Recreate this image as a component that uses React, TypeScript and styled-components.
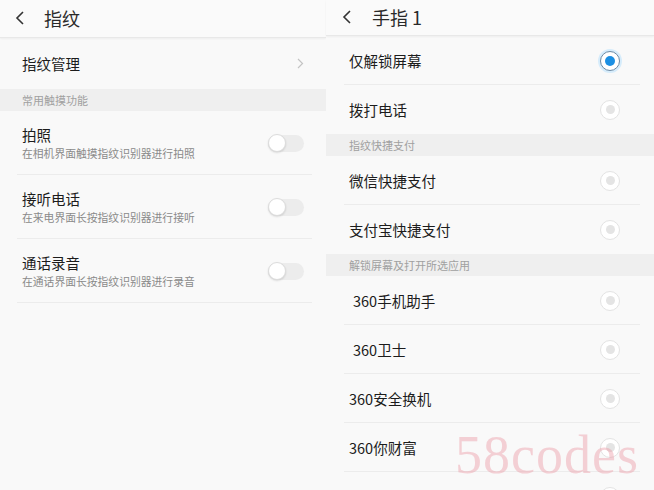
import styled, { createGlobalStyle } from 'styled-components';

const GlobalStyle = createGlobalStyle`
  html, body {
    margin: 0;
    padding: 0;
    background: #f8f8f8;
  }
  * {
    box-sizing: border-box;
  }
`;

const Screen = styled.div`
  position: relative;
  width: 654px;
  height: 490px;
  overflow: hidden;
  display: flex;
  background: #f8f8f8;
  font-family: 'Noto Sans CJK SC', 'Noto Sans', sans-serif;
  color: #1f1f1f;
`;

const Panel = styled.div<{ $width: number }>`
  width: ${({ $width }) => $width}px;
  flex-shrink: 0;
  display: flex;
  flex-direction: column;
  background: #f9f9f9;
`;

const Header = styled.div<{ $height: number; $backLeft: number; $gap: number }>`
  height: ${({ $height }) => $height}px;
  flex-shrink: 0;
  display: flex;
  align-items: center;
  gap: ${({ $gap }) => $gap}px;
  padding-left: ${({ $backLeft }) => $backLeft}px;
  padding-bottom: 2px;
  border-bottom: 1px solid #e8e8e8;
  box-shadow: 0 1px 2px rgba(0, 0, 0, 0.05);
  background: #fafafa;
`;

const HeaderTitle = styled.span`
  font-size: 18px;
  line-height: 1;
  color: #2a2a2a;
`;

const Section = styled.div<{ $height: number; $pad: number }>`
  height: ${({ $height }) => $height}px;
  flex-shrink: 0;
  display: flex;
  align-items: center;
  padding-left: ${({ $pad }) => $pad}px;
  background: #efefef;
  font-size: 11px;
  color: #a0a0a0;
`;

const Row = styled.div<{ $height: number; $pad: number; $last?: boolean }>`
  height: ${({ $height }) => $height}px;
  flex-shrink: 0;
  display: flex;
  align-items: center;
  justify-content: space-between;
  padding-left: ${({ $pad }) => $pad}px;
  position: relative;
  &::after {
    content: '';
    display: ${({ $last }) => ($last ? 'none' : 'block')};
    position: absolute;
    left: ${({ $pad }) => $pad - 5}px;
    right: 14px;
    bottom: 0;
    height: 1px;
    background: #ececec;
  }
`;

const TextBlock = styled.div`
  display: flex;
  flex-direction: column;
  gap: 2px;
`;

const Title = styled.span<{ $indent?: number }>`
  font-size: 14.5px;
  line-height: 18px;
  color: #1c1c1c;
  padding-left: ${({ $indent }) => $indent ?? 0}px;
`;

const Subtitle = styled.span`
  font-size: 10.8px;
  line-height: 14px;
  color: #8a8a8a;
`;

const Trail = styled.div<{ $right: number }>`
  display: flex;
  align-items: center;
  padding-right: ${({ $right }) => $right}px;
`;

const ToggleTrack = styled.div`
  width: 36px;
  height: 17px;
  border-radius: 9px;
  background: #ececec;
  display: flex;
  align-items: center;
`;

const ToggleKnob = styled.div`
  width: 18px;
  height: 18px;
  border-radius: 50%;
  background: #fff;
  border: 1px solid #dcdcdc;
  box-shadow: 0 1px 2px rgba(0, 0, 0, 0.12);
`;

const RadioRing = styled.div<{ $on?: boolean }>`
  width: 20px;
  height: 20px;
  border-radius: 50%;
  display: flex;
  align-items: center;
  justify-content: center;
  background: #fff;
  border: 1.5px solid ${({ $on }) => ($on ? '#6d8aa3' : '#e3e3e3')};
  box-shadow: ${({ $on }) => ($on ? '0 0 0 2px #d6ecfb' : 'none')};
`;

const RadioDot = styled.div<{ $on?: boolean }>`
  width: ${({ $on }) => ($on ? 10 : 9)}px;
  height: ${({ $on }) => ($on ? 10 : 9)}px;
  border-radius: 50%;
  background: ${({ $on }) => ($on ? '#1b8fe3' : '#e4e4e4')};
`;

const Watermark = styled.div`
  position: absolute;
  left: 455px;
  top: 428px;
  font-family: 'Liberation Serif', serif;
  font-size: 54px;
  line-height: 1;
  letter-spacing: 1px;
  color: rgba(236, 150, 162, 0.42);
  pointer-events: none;
`;

function BackIcon() {
  return (
    <svg width="10" height="14" viewBox="0 0 10 14">
      <path d="M8 1 L2 7 L8 13" fill="none" stroke="#333" strokeWidth="1.6" />
    </svg>
  );
}

function ChevronRight() {
  return (
    <svg width="7" height="11" viewBox="0 0 7 11">
      <path d="M1 1 L5.5 5.5 L1 10" fill="none" stroke="#c4c4c4" strokeWidth="1.2" />
    </svg>
  );
}

function Toggle() {
  return (
    <ToggleTrack>
      <ToggleKnob />
    </ToggleTrack>
  );
}

function Radio({ on }: { on?: boolean }) {
  return (
    <RadioRing $on={on}>
      <RadioDot $on={on} />
    </RadioRing>
  );
}

const switches = [
  { title: '拍照', sub: '在相机界面触摸指纹识别器进行拍照' },
  { title: '接听电话', sub: '在来电界面长按指纹识别器进行接听' },
  { title: '通话录音', sub: '在通话界面长按指纹识别器进行录音' },
];

const appRows = [
  { title: '360手机助手', indent: 4 },
  { title: '360卫士', indent: 4 },
  { title: '360安全换机', indent: 0 },
  { title: '360你财富', indent: 0 },
  { title: '', indent: 0 },
];

export default function App() {
  return (
    <>
      <GlobalStyle />
      <Screen>
        <Panel $width={326}>
          <Header $height={38} $backLeft={15} $gap={19}>
            <BackIcon />
            <HeaderTitle>指纹</HeaderTitle>
          </Header>
          <Row $height={51} $pad={22} $last>
            <Title>指纹管理</Title>
            <Trail $right={22}>
              <ChevronRight />
            </Trail>
          </Row>
          <Section $height={22} $pad={22}>
            常用触摸功能
          </Section>
          {switches.map((s) => (
            <Row key={s.title} $height={64} $pad={22}>
              <TextBlock>
                <Title>{s.title}</Title>
                <Subtitle>{s.sub}</Subtitle>
              </TextBlock>
              <Trail $right={22}>
                <Toggle />
              </Trail>
            </Row>
          ))}
        </Panel>

        <Panel $width={328}>
          <Header $height={36} $backLeft={16} $gap={20}>
            <BackIcon />
            <HeaderTitle>手指 1</HeaderTitle>
          </Header>
          <Row $height={49} $pad={23}>
            <Title>仅解锁屏幕</Title>
            <Trail $right={34}>
              <Radio on />
            </Trail>
          </Row>
          <Row $height={49} $pad={23} $last>
            <Title>拨打电话</Title>
            <Trail $right={34}>
              <Radio />
            </Trail>
          </Row>
          <Section $height={22} $pad={23}>
            指纹快捷支付
          </Section>
          <Row $height={49} $pad={23}>
            <Title>微信快捷支付</Title>
            <Trail $right={34}>
              <Radio />
            </Trail>
          </Row>
          <Row $height={49} $pad={23} $last>
            <Title>支付宝快捷支付</Title>
            <Trail $right={34}>
              <Radio />
            </Trail>
          </Row>
          <Section $height={22} $pad={23}>
            解锁屏幕及打开所选应用
          </Section>
          {appRows.map((a, i) => (
            <Row key={i} $height={49} $pad={23}>
              <Title $indent={a.indent}>{a.title}</Title>
              <Trail $right={34}>
                <Radio />
              </Trail>
            </Row>
          ))}
        </Panel>

        <Watermark>58codes</Watermark>
      </Screen>
    </>
  );
}
